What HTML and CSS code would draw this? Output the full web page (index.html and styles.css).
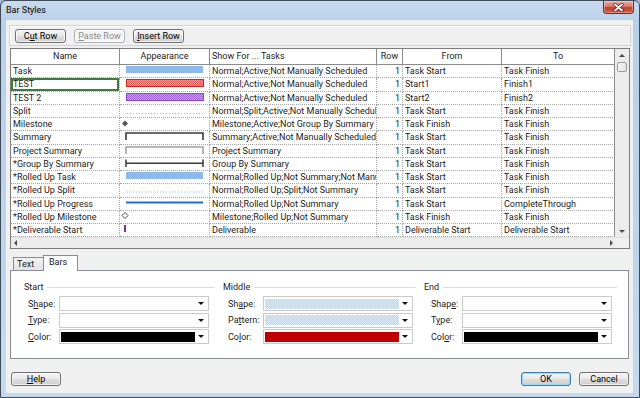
FILE: index.html
```html
<!DOCTYPE html>
<html lang="en">
<head>
  <meta charset="UTF-8" />
  <title>Bar Styles</title>
  <link rel="stylesheet" href="styles.css">
</head>
<body>

  <!-- shared fills for the hatched bars -->
  <svg class="defs" width="0" height="0">
    <defs>
      <pattern id="hatchRed" width="2" height="2" patternUnits="userSpaceOnUse">
        <rect width="2" height="2" fill="#f2a9a9"/>
        <rect width="1" height="1" fill="#de5656"/>
        <rect x="1" y="1" width="1" height="1" fill="#de5656"/>
      </pattern>
      <pattern id="hatchPurple" width="2" height="2" patternUnits="userSpaceOnUse">
        <rect width="2" height="2" fill="#c9a8ec"/>
        <rect width="1" height="1" fill="#9b5fd6"/>
        <rect x="1" y="1" width="1" height="1" fill="#9b5fd6"/>
      </pattern>
    </defs>
  </svg>

  <div class="window">
    <div class="titlebar">
      <span class="title">Bar Styles</span>
      <div class="close">
        <svg width="11" height="9" viewBox="0 0 11 9">
          <path d="M2 1.5 L9 7.5 M9 1.5 L2 7.5" stroke="#5a1d16" stroke-width="3.2" stroke-linecap="round"/>
          <path d="M2 1.5 L9 7.5 M9 1.5 L2 7.5" stroke="#fff" stroke-width="1.8" stroke-linecap="round"/>
        </svg>
      </div>
    </div>

    <div class="client">

      <!-- Toolbar -->
      <div class="toolbar">
        <button class="btn">C<u>u</u>t Row</button>
        <button class="btn" disabled><u>P</u>aste Row</button>
        <button class="btn"><u>I</u>nsert Row</button>
      </div>

      <!-- Bar styles sheet -->
      <div class="grid">
        <div class="grid-main">
          <div class="sheet">
            <div class="head">
              <div>Name</div>
              <div>Appearance</div>
              <div class="left">Show For ... Tasks</div>
              <div>Row</div>
              <div>From</div>
              <div>To</div>
            </div>

            <div class="row">
              <div>Task</div>
              <div class="app"><svg width="89" height="12"><rect x="6" y="1" width="77" height="7" fill="#8cb9ea"/></svg></div>
              <div>Normal;Active;Not Manually Scheduled</div>
              <div class="num">1</div>
              <div>Task Start</div>
              <div>Task Finish</div>
            </div>
            <div class="row">
              <div class="sel">TEST</div>
              <div class="app"><svg width="89" height="12"><rect x="6.5" y="1.5" width="77" height="7" fill="url(#hatchRed)" stroke="#d42424"/></svg></div>
              <div>Normal;Active;Not Manually Scheduled</div>
              <div class="num">1</div>
              <div>Start1</div>
              <div>Finish1</div>
            </div>
            <div class="row">
              <div>TEST 2</div>
              <div class="app"><svg width="89" height="12"><rect x="6.5" y="1.5" width="77" height="7" fill="url(#hatchPurple)" stroke="#8a45c8"/></svg></div>
              <div>Normal;Active;Not Manually Scheduled</div>
              <div class="num">1</div>
              <div>Start2</div>
              <div>Finish2</div>
            </div>
            <div class="row">
              <div>Split</div>
              <div class="app"><svg width="89" height="12"><line x1="7" y1="8.5" x2="84" y2="8.5" stroke="#86b3e6" stroke-dasharray="1 2"/></svg></div>
              <div>Normal;Split;Active;Not Manually Scheduled</div>
              <div class="num">1</div>
              <div>Task Start</div>
              <div>Task Finish</div>
            </div>
            <div class="row">
              <div>Milestone</div>
              <div class="app"><svg width="89" height="12"><path d="M5 2.5 L8 5.5 L5 8.5 L2 5.5Z" fill="#555"/></svg></div>
              <div>Milestone;Active;Not Group By Summary</div>
              <div class="num">1</div>
              <div>Task Finish</div>
              <div>Task Finish</div>
            </div>
            <div class="row">
              <div>Summary</div>
              <div class="app"><svg width="89" height="12"><path d="M6 9 V2 H83 V9" fill="none" stroke="#3a3a3a" stroke-width="1.6"/></svg></div>
              <div>Summary;Active;Not Manually Scheduled</div>
              <div class="num">1</div>
              <div>Task Start</div>
              <div>Task Finish</div>
            </div>
            <div class="row">
              <div>Project Summary</div>
              <div class="app"><svg width="89" height="12"><path d="M6 9 V2 H83 V9" fill="none" stroke="#a3a3a3" stroke-width="1.6"/></svg></div>
              <div>Project Summary</div>
              <div class="num">1</div>
              <div>Task Start</div>
              <div>Task Finish</div>
            </div>
            <div class="row">
              <div>*Group By Summary</div>
              <div class="app"><svg width="89" height="12"><path d="M6 1.5 V9 M83 1.5 V9 M6 5.25 H83" fill="none" stroke="#3a3a3a" stroke-width="1.5"/></svg></div>
              <div>Group By Summary</div>
              <div class="num">1</div>
              <div>Task Start</div>
              <div>Task Finish</div>
            </div>
            <div class="row">
              <div>*Rolled Up Task</div>
              <div class="app"><svg width="89" height="12"><rect x="6" y="1" width="77" height="7" fill="#8cb9ea"/></svg></div>
              <div>Normal;Rolled Up;Not Summary;Not Manually Scheduled</div>
              <div class="num">1</div>
              <div>Task Start</div>
              <div>Task Finish</div>
            </div>
            <div class="row">
              <div>*Rolled Up Split</div>
              <div class="app"><svg width="89" height="12"><line x1="7" y1="8" x2="84" y2="8" stroke="#86b3e6" stroke-dasharray="1 2"/></svg></div>
              <div>Normal;Rolled Up;Split;Not Summary</div>
              <div class="num">1</div>
              <div>Task Start</div>
              <div>Task Finish</div>
            </div>
            <div class="row">
              <div>*Rolled Up Progress</div>
              <div class="app"><svg width="89" height="12"><line x1="6" y1="4.5" x2="83" y2="4.5" stroke="#1c6fd2" stroke-width="2"/></svg></div>
              <div>Normal;Rolled Up;Not Summary</div>
              <div class="num">1</div>
              <div>Task Start</div>
              <div>CompleteThrough</div>
            </div>
            <div class="row">
              <div>*Rolled Up Milestone</div>
              <div class="app"><svg width="89" height="12"><path d="M5 1.5 L8 4.5 L5 7.5 L2 4.5Z" fill="#fff" stroke="#444"/></svg></div>
              <div>Milestone;Rolled Up;Not Summary</div>
              <div class="num">1</div>
              <div>Task Finish</div>
              <div>Task Finish</div>
            </div>
            <div class="row">
              <div>*Deliverable Start</div>
              <div class="app"><svg width="89" height="12"><line x1="5" y1="1" x2="5" y2="8" stroke="#7432ab" stroke-width="2"/></svg></div>
              <div>Deliverable</div>
              <div class="num">1</div>
              <div>Deliverable Start</div>
              <div>Deliverable Start</div>
            </div>
          </div>

          <div class="vscroll">
            <span class="arrow up"></span>
            <span class="thumb"></span>
            <span class="arrow down"></span>
          </div>
        </div>
        <div class="hscroll">
          <span class="arrow left"></span>
          <span class="arrow right"></span>
          <span class="corner"></span>
        </div>
      </div>

      <!-- Tabs -->
      <div class="tabs">
        <div class="tab">Text</div>
        <div class="tab active">Bars</div>
      </div>
      <div class="panel">
        <div class="groups">
          <div class="group col-start">
            <div class="group-title">Start</div>
            <div class="field">
              <label>S<u>h</u>ape:</label>
              <div class="combo"><span class="drop"></span></div>
            </div>
            <div class="field">
              <label><u>T</u>ype:</label>
              <div class="combo"><span class="drop"></span></div>
            </div>
            <div class="field">
              <label><u>C</u>olor:</label>
              <div class="combo"><span class="swatch black"></span><span class="drop"></span></div>
            </div>
          </div>

          <div class="group col-middle">
            <div class="group-title">Middle</div>
            <div class="field">
              <label>Sh<u>a</u>pe:</label>
              <div class="combo"><span class="swatch dots"></span><span class="drop"></span></div>
            </div>
            <div class="field">
              <label>Pa<u>t</u>tern:</label>
              <div class="combo"><span class="swatch dots"></span><span class="drop"></span></div>
            </div>
            <div class="field">
              <label>Co<u>l</u>or:</label>
              <div class="combo"><span class="swatch red"></span><span class="drop"></span></div>
            </div>
          </div>

          <div class="group col-end">
            <div class="group-title">End</div>
            <div class="field">
              <label>Shap<u>e</u>:</label>
              <div class="combo"><span class="drop"></span></div>
            </div>
            <div class="field">
              <label>T<u>y</u>pe:</label>
              <div class="combo"><span class="drop"></span></div>
            </div>
            <div class="field">
              <label>Col<u>o</u>r:</label>
              <div class="combo"><span class="swatch black"></span><span class="drop"></span></div>
            </div>
          </div>
        </div>
      </div>

      <!-- Footer -->
      <div class="footer">
        <button class="btn"><u>H</u>elp</button>
        <span class="spacer"></span>
        <button class="btn default">OK</button>
        <button class="btn">Cancel</button>
      </div>
    </div>
  </div>

</body>
</html>
```

FILE: styles.css
```css
* {
  box-sizing: border-box;
}
html, body {
  margin: 0;
  padding: 0;
  width: 640px;
  height: 398px;
  overflow: hidden;
  font-family: Roboto, "Liberation Sans", sans-serif;
  font-size: 9px;
  color: #1b1b1b;
  background: #9fb8d3;
}
.defs {
  display: block;
  width: 0;
  height: 0;
}
.window {
  width: 640px;
  height: 398px;
  display: flex;
  flex-direction: column;
  padding: 0 6px 4px 5px;
  border: 1px solid #3f4b59;
  border-radius: 6px 6px 0 0;
  background: linear-gradient(180deg, #c9dbee 0%, #b9d0e9 5%, #bfd4eb 60%, #c6daef 100%);
}
.titlebar {
  height: 19px;
  display: flex;
  justify-content: space-between;
  align-items: flex-start;
}
.title {
  margin-top: 4px;
  line-height: 11px;
  color: #000;
}
.close {
  width: 31px;
  height: 13px;
  margin-right: -1px;
  display: flex;
  align-items: center;
  justify-content: center;
  border: 1px solid #6b2b22;
  border-top: none;
  border-radius: 0 0 4px 4px;
  background: linear-gradient(180deg, #eaaca2 0%, #d9796b 45%, #c3402e 55%, #d05c45 100%);
  box-shadow: inset 0 0 0 1px rgba(255, 255, 255, 0.35);
}
.client {
  flex: 1;
  display: flex;
  flex-direction: column;
  background: #f0f0f0;
}

/* buttons */
.btn {
  width: 51px;
  height: 14px;
  padding: 0;
  font: inherit;
  line-height: 12px;
  color: #000;
  border: 1px solid #707070;
  border-radius: 3px;
  background: linear-gradient(180deg, #f2f2f2 0%, #ebebeb 45%, #dddddd 50%, #cfcfcf 100%);
  box-shadow: inset 0 0 0 1px rgba(255, 255, 255, 0.7);
}
.btn:disabled {
  color: #8d8d8d;
  border-color: #adb2b5;
  background: #f4f4f4;
}
.btn.default {
  border-color: #3c7fb1;
  box-shadow: inset 0 0 0 1px #9ad8f7;
}

.toolbar {
  height: 21px;
  margin: 5px 2px 0 3px;
  padding: 3px 0 0 5px;
  display: flex;
  gap: 8px;
  border: 1px solid #d2d2d2;
  box-shadow: inset 1px 1px 0 #fff;
}

/* sheet */
.grid {
  width: 620px;
  height: 201px;
  margin: 2px 0 0 4px;
  display: flex;
  flex-direction: column;
  border: 1px solid #7d7d7d;
  background: #fff;
}
.grid-main {
  display: flex;
}
.sheet {
  width: 604px;
}
.head, .row {
  display: grid;
  grid-template-columns: 109px 90px 167px 26px 99px 113px;
}
.head {
  height: 16px;
  border-bottom: 1px solid #8c8c8c;
}
.head > div {
  border-right: 1px solid #8c8c8c;
  text-align: center;
  line-height: 15px;
  color: #222;
}
.head > .left {
  text-align: left;
  padding-left: 2px;
}
.row {
  height: 13.25px;
}
.row > div {
  padding: 0 2px;
  line-height: 12.5px;
  white-space: nowrap;
  overflow: hidden;
  border-right: 1px dotted #a5a5a5;
  border-bottom: 1px dotted #a5a5a5;
}
.head > div:last-child, .row > div:last-child {
  border-right: 1px solid #8c8c8c;
}
.row > .num {
  text-align: right;
}
.row > .app {
  padding: 0;
}
.app svg {
  display: block;
}
.row > .sel {
  box-shadow: inset 0 0 0 2px #3f7b3f;
}

/* scrollbars */
.arrow {
  width: 0;
  height: 0;
  display: block;
}
.arrow.up {
  border-left: 3px solid transparent;
  border-right: 3px solid transparent;
  border-bottom: 3px solid #4a4a4a;
}
.arrow.down {
  border-left: 3px solid transparent;
  border-right: 3px solid transparent;
  border-top: 3px solid #4a4a4a;
}
.arrow.left {
  border-top: 3px solid transparent;
  border-bottom: 3px solid transparent;
  border-right: 3px solid #4a4a4a;
}
.arrow.right {
  border-top: 3px solid transparent;
  border-bottom: 3px solid transparent;
  border-left: 3px solid #4a4a4a;
}
.vscroll {
  width: 14px;
  display: flex;
  flex-direction: column;
  align-items: center;
  padding: 5px 0 4px;
  background: #ececec;
}
.thumb {
  width: 10px;
  height: 10px;
  margin-top: 5px;
  border: 1px solid #9b9b9b;
  border-radius: 2px;
  background: linear-gradient(90deg, #f4f4f4, #e4e4e4);
}
.vscroll .down {
  margin-top: auto;
}
.hscroll {
  flex: 1;
  display: flex;
  align-items: center;
  padding-left: 3px;
  background: #ececec;
  border-top: 1px solid #e0e0e0;
}
.hscroll .right {
  margin-left: auto;
  margin-right: 2px;
}
.corner {
  width: 14px;
  align-self: stretch;
  background: #f0f0f0;
}

/* tabs */
.tabs {
  height: 15px;
  margin: 6px 0 0 7px;
  display: flex;
  align-items: flex-end;
  position: relative;
  z-index: 1;
}
.tab {
  width: 30px;
  height: 13px;
  padding-left: 3px;
  line-height: 12px;
  border: 1px solid #898c95;
  border-bottom: none;
  border-right: none;
  background: linear-gradient(180deg, #f3f3f3, #e3e3e3);
}
.tab.active {
  width: 35px;
  height: 16px;
  padding-left: 5px;
  margin-bottom: -1px;
  line-height: 13px;
  border-right: 1px solid #898c95;
  background: #fff;
}
.panel {
  width: 619px;
  height: 89px;
  margin-left: 4px;
  padding: 11px 3px 0 13px;
  border: 1px solid #898c95;
  background: #fff;
}
.groups {
  display: grid;
  grid-template-columns: 199px 201px 201px;
}
.group-title {
  height: 11px;
  line-height: 11px;
  display: flex;
  align-items: center;
  color: #222;
}
.group-title::after {
  content: "";
  flex: 1;
  height: 1px;
  margin: 0 8px 0 4px;
  background: #d5dfe5;
}
.field {
  height: 15px;
  margin-top: 1.5px;
  display: flex;
  align-items: center;
}
.group .field:nth-child(2) {
  margin-top: 3px;
}
.field label {
  width: var(--label-w);
  padding-left: var(--label-pad);
  color: #222;
}
.col-start { --label-w: 35px; --label-pad: 4px; }
.col-middle { --label-w: 40px; --label-pad: 5px; }
.col-end { --label-w: 38px; --label-pad: 7px; }
.combo {
  width: 150px;
  height: 15px;
  display: flex;
  align-items: center;
  padding-left: 1px;
  border: 1px solid #cacaca;
  background: #fff;
}
.swatch {
  width: 134px;
  height: 10px;
}
.swatch.black {
  background: #000;
}
.swatch.red {
  background: #c00000;
}
.swatch.dots {
  background: repeating-conic-gradient(#b9d5f2 0 25%, #dcebfa 0 50%) 0 0 / 2px 2px;
}
.drop {
  margin-left: auto;
  margin-right: 4px;
  width: 0;
  height: 0;
  border-left: 3px solid transparent;
  border-right: 3px solid transparent;
  border-top: 3px solid #111;
}

/* footer */
.footer {
  margin-top: 13px;
  padding: 0 4px 0 5px;
  display: flex;
  gap: 8px;
}
.footer .btn {
  width: 50px;
}
.spacer {
  flex: 1;
}
```
